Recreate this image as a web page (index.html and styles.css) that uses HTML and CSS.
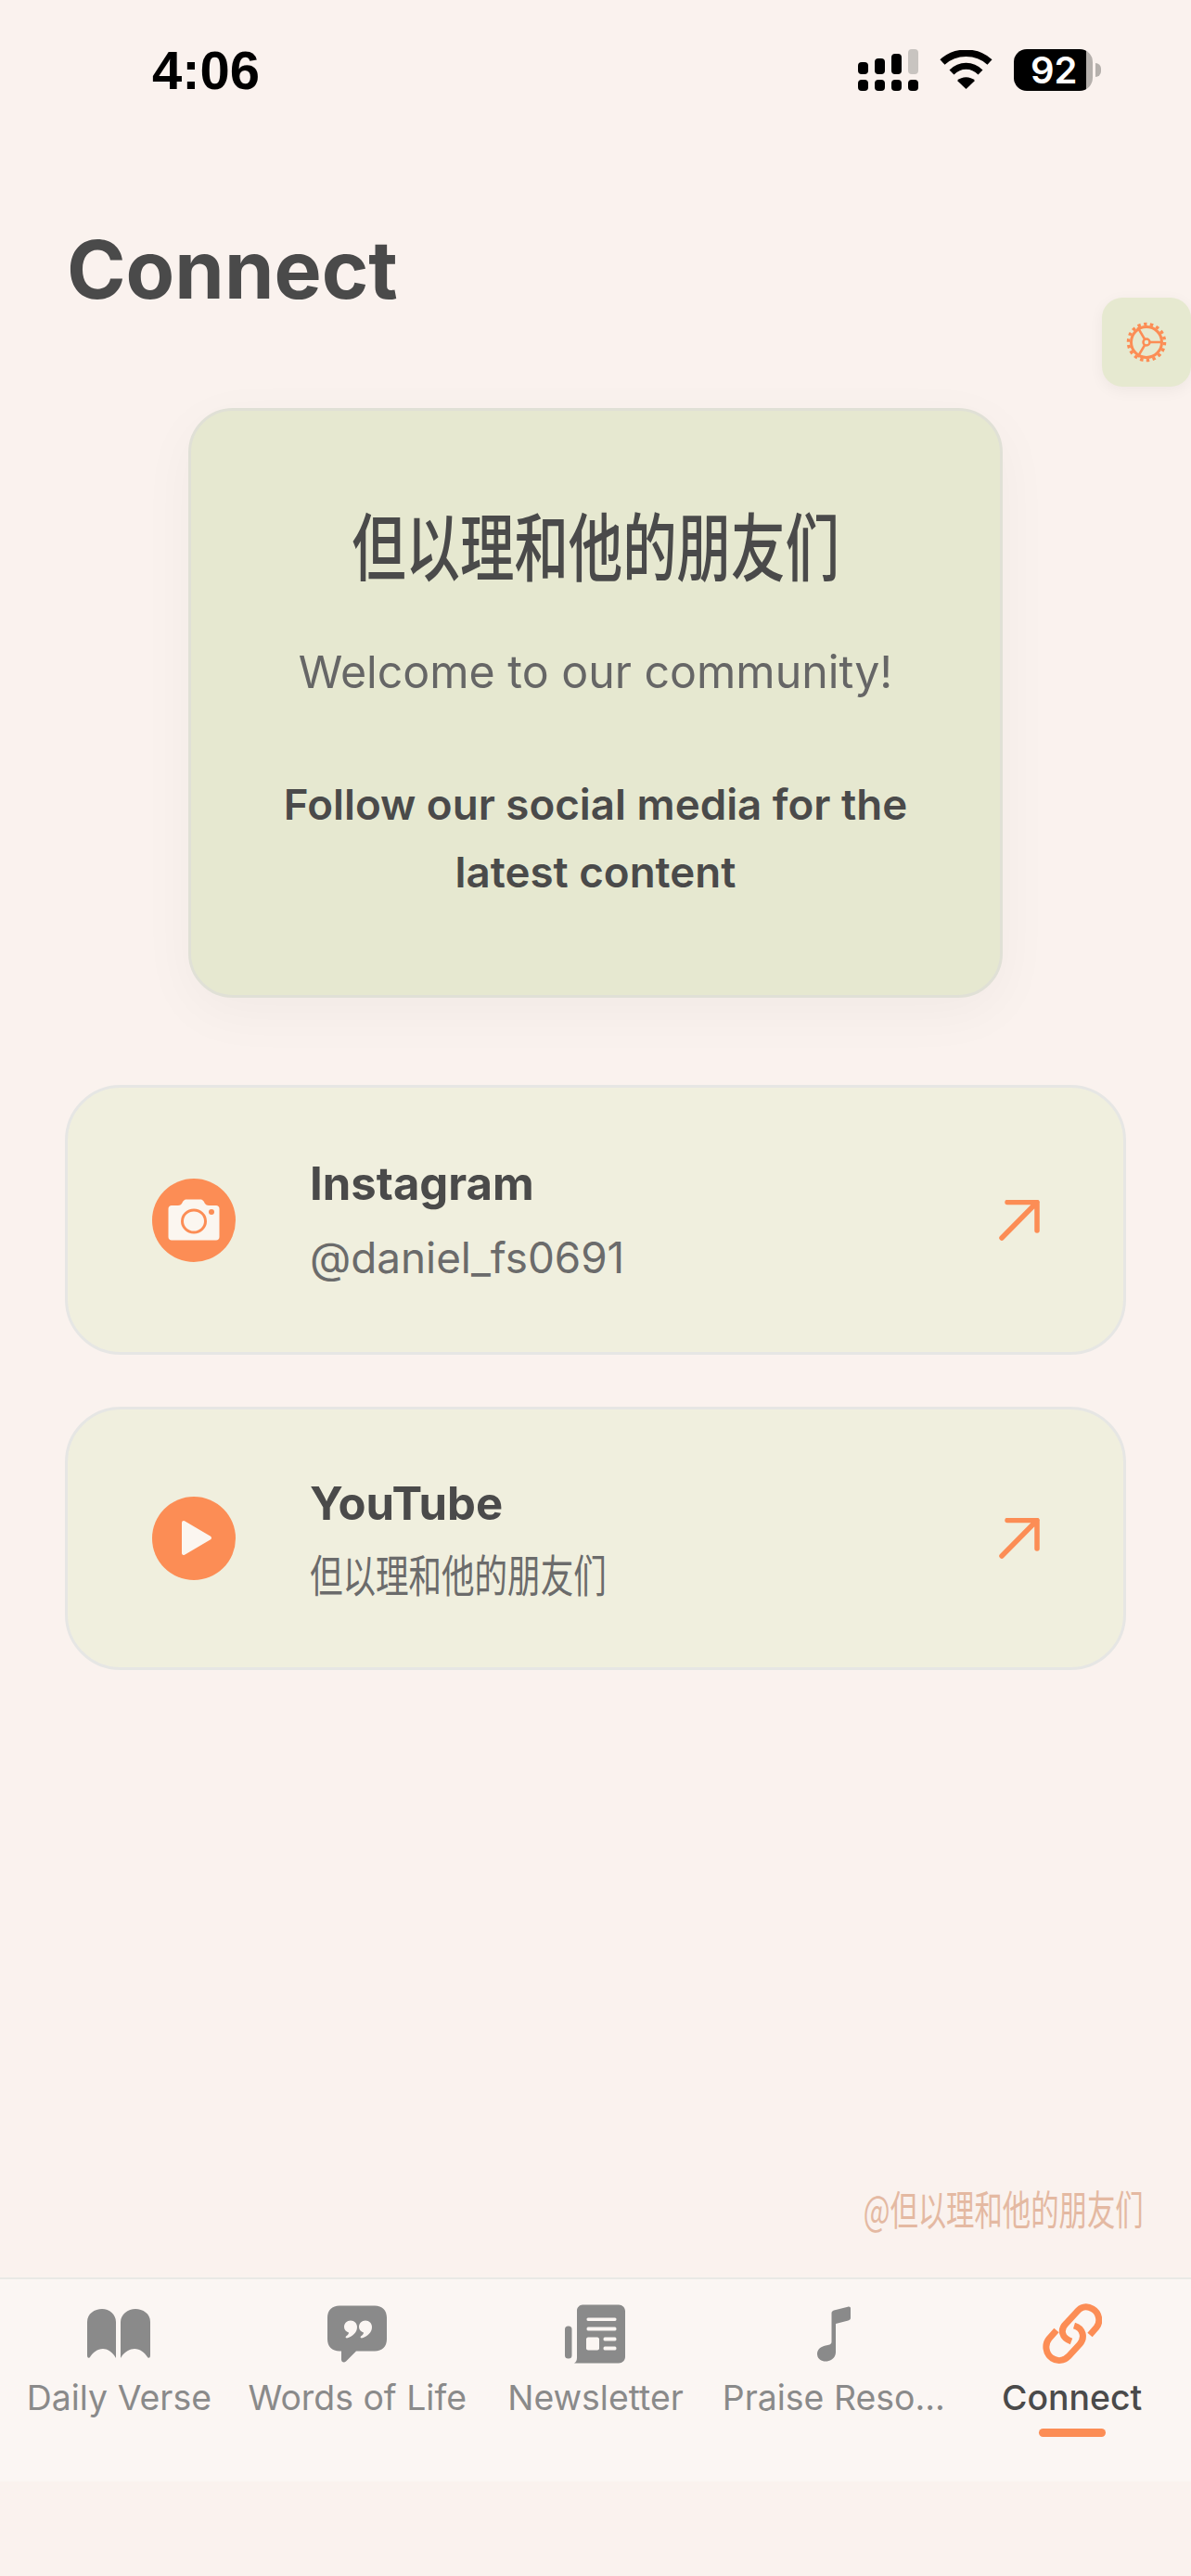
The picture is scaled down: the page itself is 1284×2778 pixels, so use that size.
FILE: index.html
```html
<!DOCTYPE html>
<html lang="en">
<head>
    <meta charset="UTF-8">
    <meta name="viewport" content="width=device-width, initial-scale=1.0">
    <title>Connect</title>
    <link rel="stylesheet" href="styles.css">
</head>
<body>
    <div class="status-bar">
        <span class="status-time">4:06</span>
        <div class="status-icons">
            <svg class="signal-icon" viewBox="0 0 65 45" width="65" height="45">
                <rect x="0" y="14" width="11" height="13" rx="4"/>
                <rect x="18" y="10" width="11" height="17" rx="4"/>
                <rect x="36" y="5" width="11" height="22" rx="4"/>
                <rect x="54" y="0" width="11" height="27" rx="4" fill="#c8c4c0"/>
                <rect x="0" y="33" width="11" height="12" rx="4"/>
                <rect x="18" y="33" width="11" height="12" rx="4"/>
                <rect x="36" y="33" width="11" height="12" rx="4"/>
                <rect x="54" y="33" width="11" height="12" rx="4"/>
            </svg>
            <svg class="wifi-icon" viewBox="0 0 57 42" width="57" height="42">
                <path d="M3 13C17 0 40 0 54 13" fill="none" stroke="#000" stroke-width="7.5"/>
                <path d="M13 24C22 15 35 15 44 24" fill="none" stroke="#000" stroke-width="7"/>
                <path d="M19 33C24 28 33 28 38 33L28.5 42Z"/>
            </svg>
            <div class="battery">92</div>
        </div>
    </div>

    <h1 class="page-title">Connect</h1>

    <button class="settings-btn" type="button" aria-label="Settings">
        <svg viewBox="0 0 44 44" width="44" height="44" fill="none" stroke="#fc8d55">
            <circle cx="22" cy="22" r="19.5" stroke-width="3.5" stroke-dasharray="3.4 3.4"/>
            <circle cx="22" cy="22" r="16.5" stroke-width="3"/>
            <circle cx="22" cy="22" r="3.5" stroke-width="2.5"/>
            <path d="M25.5 22H38M20.2 25L12.5 38M20.2 19L12.5 6" stroke-width="2.5"/>
        </svg>
    </button>

    <main class="content">
        <section class="hero-card">
            <h2 class="hero-title"><span class="narrow">但以理和他的朋友们</span></h2>
            <p class="hero-welcome">Welcome to our community!</p>
            <p class="hero-follow">Follow our social media for the latest content</p>
        </section>

        <a class="link-card link-instagram">
            <svg class="link-icon" viewBox="0 0 90 90" width="90" height="90">
                <circle cx="45" cy="45" r="45" fill="#fc8d55"/>
                <path fill="#fbf6f0" d="M21 29H28C30 29 31 28 32 27C33 25 34 22.500 37 22.500H52C55 22.500 56 25 57 27C58 28 59 29 61 29H69C71 29 72.500 30.500 72.500 32.500V63C72.500 65 71 66.500 69 66.500H21C19 66.500 17.500 65 17.500 63V32.500C17.500 30.500 19 29 21 29Z"/>
                <ellipse cx="45" cy="46" rx="12.500" ry="12" fill="none" stroke="#fc8d55" stroke-width="3"/>
                <circle cx="64" cy="36" r="3" fill="#fc8d55"/>
            </svg>
            <div class="link-text">
                <div class="link-name">Instagram</div>
                <div class="link-handle">@daniel_fs0691</div>
            </div>
            <svg class="link-arrow" viewBox="0 0 44 44" width="44" height="44">
                <path d="M9 2.500H41V33M41 2.500L3 41"/>
            </svg>
        </a>

        <a class="link-card link-youtube">
            <svg class="link-icon" viewBox="0 0 90 90" width="90" height="90">
                <circle cx="45" cy="45" r="45" fill="#fc8d55"/>
                <path fill="#fbf6f0" stroke="#fbf6f0" stroke-width="4" stroke-linejoin="round" d="M34 28L62 44.500L34 61Z"/>
            </svg>
            <div class="link-text">
                <div class="link-name">YouTube</div>
                <div class="link-channel"><span class="narrow">但以理和他的朋友们</span></div>
            </div>
            <svg class="link-arrow" viewBox="0 0 44 44" width="44" height="44">
                <path d="M9 2.500H41V33M41 2.500L3 41"/>
            </svg>
        </a>

        <div class="watermark"><span class="narrow">@但以理和他的朋友们</span></div>
    </main>

    <nav class="tab-bar">
        <a class="tab">
            <svg viewBox="0 0 68 54" width="68" height="54" fill="#8a8a8a">
                <path d="M0 50V14C0 5 8 0 16 0C24 0 31 6 31 14V53C27 46 22 43 17 43C11 43 6 47 3 52C1 54 0 52 0 50Z"/>
                <path d="M68 50V14C68 5 60 0 52 0C44 0 36 6 36 14V53C40 46 46 43 51 43C57 43 62 47 65 52C67 54 68 52 68 50Z"/>
            </svg>
            <span class="tab-label">Daily Verse</span>
        </a>
        <a class="tab">
            <svg viewBox="0 0 64 61" width="64" height="61" fill="#8a8a8a">
                <path d="M13 0H51C59 0 64 5 64 13V36C64 44 59 49 51 49H31L20 60C18 62 15 61 15 58V49H13C5 49 0 44 0 36V13C0 5 5 0 13 0Z"/>
                <path fill="#fbf6f3" d="M25 16C29 16 32 19 32 23C32 29 27 33 21 35C20 35 19 34 20 33C22 32 23 30 23 29C20 28 18 26 18 23C18 19 21 16 25 16ZM41 16C45 16 48 19 48 23C48 29 43 33 37 35C36 35 35 34 36 33C38 32 39 30 39 29C36 28 34 26 34 23C34 19 37 16 41 16Z"/>
            </svg>
            <span class="tab-label">Words of Life</span>
        </a>
        <a class="tab">
            <svg viewBox="0 0 65 63" width="65" height="63" fill="#8a8a8a">
                <rect x="0" y="23" width="7.500" height="35" rx="3.500"/>
                <path fill-rule="evenodd" d="M19 0H58C62 0 65 3 65 7V56C65 60 62 63 58 63H10C12 62 13 60 13 57V6C13 3 16 0 19 0ZM25 14C23 14 23 17.500 25 17.500H54C56 17.500 56 14 54 14ZM25 24C23 24 23 28 25 28H54C56 28 56 24 54 24ZM25 35C24 35 23 36 23 37V47C23 48 24 49 25 49H35C36 49 37 48 37 47V37C37 36 36 35 35 35ZM43 35C41 35 41 39 43 39H54C56 39 56 35 54 35ZM43 45C41 45 41 49 43 49H54C56 49 56 45 54 45Z"/>
            </svg>
            <span class="tab-label">Newsletter</span>
        </a>
        <a class="tab">
            <svg viewBox="0 0 36 59" width="36" height="59" fill="#8a8a8a">
                <path d="M15.500 7C15.500 5.500 16.500 4.500 18 4L33 .2C35 -.2 36 .5 36 2V12C36 14 35 14.500 33.500 15L20 18.500V49C20 55 15 59 9 59C4 59 0 56 0 51C0 46 4 43 9 42C12 41.500 15.500 41 15.500 38Z"/>
            </svg>
            <span class="tab-label">Praise Reso...</span>
        </a>
        <a class="tab tab-active">
            <svg viewBox="0 0 64 64" width="64" height="64" fill="none" stroke="#fc8d55" stroke-width="7">
                <path d="M51 33L58 25C63 19 61 9 54 5C47 1 41 3 37 8L25 21C19 27 20 36 31 40"/>
                <path d="M15 28L7 37C2 43 3 53 10 58C16 62 23 61 28 56L40 43C46 36 44 26 34 23"/>
            </svg>
            <span class="tab-label">Connect</span>
        </a>
    </nav>
    <div class="home-area"></div>
</body>
</html>
```

FILE: styles.css
```css
* {
    box-sizing: border-box;
}
body {
    font-family: Inter, "Noto Sans CJK SC", sans-serif;
    margin: 0;
    width: 1284px;
    height: 2778px;
    display: flex;
    flex-direction: column;
    position: relative;
    overflow: hidden;
    background-color: #faf2ee;
    color: #4a4a4a;
}
.narrow {
    display: inline-block;
    white-space: nowrap;
    font-family: "Noto Sans CJK SC", sans-serif;
    transform: scaleX(0.73);
}

/* status bar */
.status-bar {
    height: 110px;
    padding: 43px 106px 0 164px;
    display: flex;
    justify-content: space-between;
    align-items: flex-start;
    flex-shrink: 0;
}
.status-time {
    font-family: "Liberation Sans", sans-serif;
    font-size: 58px;
    font-weight: 700;
    line-height: 66px;
    color: #000;
}
.status-icons {
    display: flex;
    align-items: flex-start;
    margin-top: 10px;
    gap: 23px;
}
.wifi-icon {
    margin-top: 1px;
}
.battery {
    position: relative;
    width: 85px;
    height: 45px;
    border-radius: 14px;
    background: linear-gradient(to right, #000 78px, #b5b0ac 78px);
    color: #fff;
    font-size: 40px;
    font-weight: 600;
    line-height: 45px;
    padding-left: 18px;
}
.battery::after {
    content: "";
    position: absolute;
    right: -9px;
    top: 15px;
    width: 6px;
    height: 15px;
    border-radius: 0 8px 8px 0;
    background-color: #b5b0ac;
}

.page-title {
    margin: 0;
    padding: 130px 0 0 72px;
    height: 330px;
    font-size: 86px;
    line-height: 102px;
    font-weight: 700;
    flex-shrink: 0;
}
.settings-btn {
    position: absolute;
    top: 321px;
    right: 0;
    width: 96px;
    height: 96px;
    border: 0;
    padding: 0;
    border-radius: 22px;
    background-color: #e6e9d0;
    box-shadow: 0 4px 16px rgba(0, 0, 0, 0.05);
    display: flex;
    align-items: center;
    justify-content: center;
}

.content {
    flex: 1;
    padding: 0 70px;
    display: flex;
    flex-direction: column;
}
.hero-card {
    width: 878px;
    height: 636px;
    margin: 0 auto 94px;
    padding: 86px 60px 0;
    border: 3px solid #e0e0d6;
    border-radius: 48px;
    background-color: #e6e8d0;
    box-shadow: 0 16px 60px rgba(0, 0, 0, 0.04);
    text-align: center;
}
.hero-title {
    margin: 0 0 48px;
    font-size: 80px;
    line-height: 112px;
    font-weight: 500;
}
.hero-welcome {
    margin: 0 0 76px;
    font-size: 48.3px;
    line-height: 60px;
    color: #666;
}
.hero-follow {
    margin: 0;
    font-size: 45.7px;
    line-height: 73px;
    font-weight: 600;
}

.link-card {
    display: flex;
    align-items: center;
    height: 291px;
    padding: 0 90px 0 91px;
    margin-bottom: 56px;
    border: 3px solid #e6e6e4;
    border-radius: 60px;
    background-color: #f0efde;
}
.link-youtube {
    height: 284px;
}
.link-text {
    flex: 1;
    margin-left: 80px;
}
.link-youtube .link-text {
    padding-top: 6px;
}
.link-name {
    font-size: 49px;
    line-height: 60px;
    font-weight: 700;
}
.link-handle {
    font-size: 45.8px;
    line-height: 56px;
    margin-top: 22px;
    color: #6b6b6b;
}
.link-channel {
    font-size: 48px;
    line-height: 66px;
    margin-top: 11px;
    color: #6b6b6b;
}
.link-channel .narrow {
    transform-origin: left center;
    transform: scaleX(0.74);
}
.link-arrow {
    fill: none;
    stroke: #fc8d55;
    stroke-width: 5.5;
    stroke-linecap: round;
    stroke-linejoin: round;
}
.watermark {
    margin-top: auto;
    margin-bottom: 47px;
    margin-right: -19px;
    text-align: right;
    font-size: 44px;
    line-height: 50px;
    color: #e4b9a2;
}
.watermark .narrow {
    transform-origin: right center;
    transform: scaleX(0.69);
}

/* bottom tabs */
.tab-bar {
    height: 220px;
    flex-shrink: 0;
    display: grid;
    grid-template-columns: repeat(5, 1fr);
    border-top: 2px solid #e9e9e5;
    background-color: #fbf6f3;
}
.tab {
    position: relative;
    height: 218px;
    padding-top: 26px;
    display: flex;
    flex-direction: column;
    align-items: center;
    min-width: 0;
}
.tab svg {
    height: 66px;
    flex-shrink: 0;
}
.tab-label {
    margin-top: 13px;
    font-size: 37.4px;
    line-height: 46px;
    color: #8a8a8a;
    white-space: nowrap;
}
.tab-active .tab-label {
    color: #4a4a4a;
    font-weight: 500;
}
.tab-active::after {
    content: "";
    position: absolute;
    left: 50%;
    top: 161px;
    width: 72px;
    height: 9px;
    margin-left: -36px;
    border-radius: 5px;
    background-color: #fc8d55;
}
.home-area {
    height: 102px;
    flex-shrink: 0;
}
```
